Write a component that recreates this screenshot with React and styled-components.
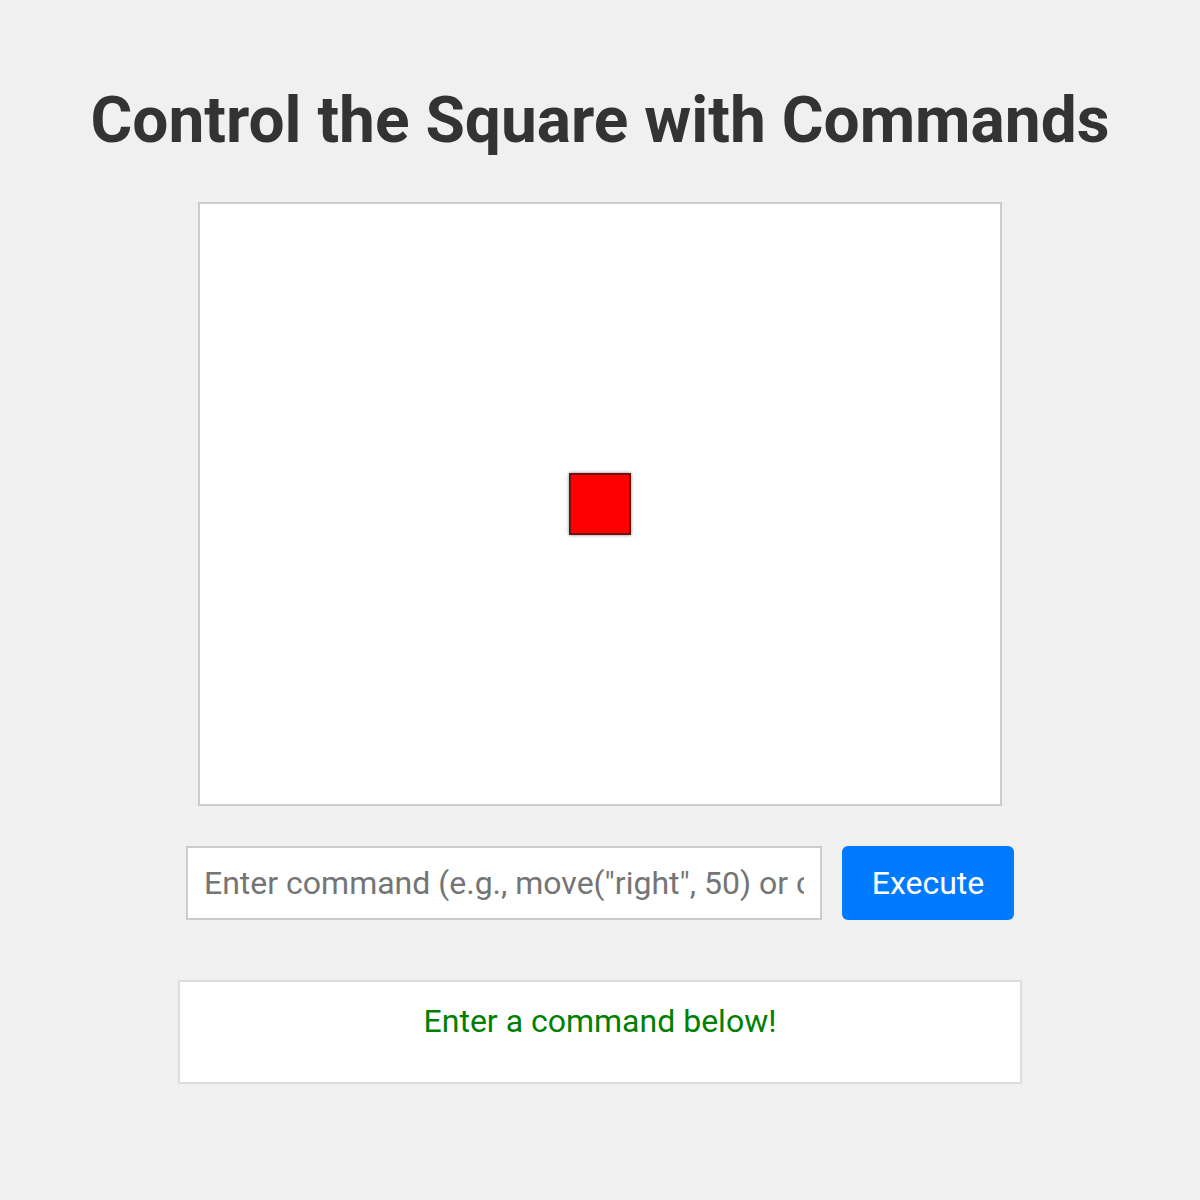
import React, { useState } from "react";
import styled, { createGlobalStyle } from "styled-components";

const Global = createGlobalStyle`
  html, body { margin: 0; padding: 0; background: #f0f0f0; }
  body { font-family: Roboto, "Liberation Sans", Arial, sans-serif; }
`;

const Page = styled.div`
  display: flex;
  flex-direction: column;
  align-items: center;
  padding-top: 80px;
`;

const Title = styled.h1`
  margin: 0 0 40px;
  font-size: 64px;
  line-height: 82px;
  font-weight: 700;
  color: #333;
`;

const Canvas = styled.div`
  width: 800px;
  height: 600px;
  background: #fff;
  border: 2px solid #ccc;
  display: flex;
  align-items: center;
  justify-content: center;
`;

const Square = styled.div`
  width: 62px;
  height: 62px;
  box-sizing: border-box;
  background: #ff0000;
  border: 2px solid #6e1212;
  box-shadow: 0 0 3px rgba(0, 0, 0, 0.5);
`;

const Controls = styled.div`
  display: flex;
  gap: 20px;
  margin-top: 40px;
`;

const Input = styled.input`
  width: 636px;
  height: 74px;
  box-sizing: border-box;
  border: 2px solid #ccc;
  background: #fff;
  padding: 0 16px;
  font-family: Roboto, "Liberation Sans", Arial, sans-serif;
  font-size: 32px;
  color: #333;
  outline: none;
  &::placeholder { color: #757575; }
`;

const Button = styled.button`
  width: 172px;
  height: 74px;
  border: none;
  border-radius: 6px;
  background: #007bff;
  color: #fff;
  font-family: Roboto, "Liberation Sans", Arial, sans-serif;
  font-size: 32px;
  cursor: pointer;
`;

const Message = styled.div`
  margin-top: 60px;
  width: 840px;
  min-height: 60px;
  padding: 20px 0;
  background: #fff;
  border: 2px solid #ddd;
  text-align: center;
  font-size: 32px;
  line-height: 38px;
  color: #008000;
`;

export default function App() {
  const [cmd, setCmd] = useState("");
  return (
    <>
      <Global />
      <Page>
        <Title>Control the Square with Commands</Title>
        <Canvas>
          <Square />
        </Canvas>
        <Controls>
          <Input
            value={cmd}
            onChange={(e) => setCmd(e.target.value)}
            placeholder={'Enter command (e.g., move("right", 50) or color("blue"))'}
          />
          <Button>Execute</Button>
        </Controls>
        <Message>Enter a command below!</Message>
      </Page>
    </>
  );
}
